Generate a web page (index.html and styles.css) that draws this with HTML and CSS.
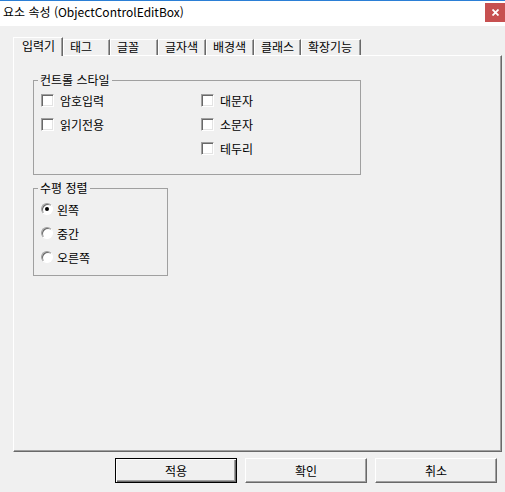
FILE: index.html
```html
<!DOCTYPE html>
<html lang="ko">
<head>
  <meta charset="UTF-8">
  <title>요소 속성 (ObjectControlEditBox)</title>
  <link rel="stylesheet" href="styles.css">
</head>
<body>
  <div class="titlebar">
    <span class="title">요소 속성 (ObjectControlEditBox)</span>
    <button class="close" aria-label="닫기">
      <svg width="7" height="7" viewBox="0 0 7 7"><path d="M0.5 0.5L6.5 6.5M6.5 0.5L0.5 6.5" stroke="#fff" stroke-width="1.8"/></svg>
    </button>
  </div>

  <div class="dialog">
    <div class="tabs">
      <div class="tab active" style="width: 50px">입력기</div>
      <div class="tab" style="width: 47px">태그</div>
      <div class="tab" style="width: 48px">글꼴</div>
      <div class="tab" style="width: 48px">글자색</div>
      <div class="tab" style="width: 48px">배경색</div>
      <div class="tab" style="width: 47px">클래스</div>
      <div class="tab" style="width: 60px">확장기능</div>
    </div>

    <div class="panel">
      <fieldset class="group style-group">
        <legend>컨트롤 스타일</legend>
        <div class="check-grid">
          <label class="check"><span class="box"></span>암호입력</label>
          <label class="check"><span class="box"></span>대문자</label>
          <label class="check"><span class="box"></span>읽기전용</label>
          <label class="check"><span class="box"></span>소문자</label>
          <span></span>
          <label class="check"><span class="box"></span>테두리</label>
        </div>
      </fieldset>

      <fieldset class="group align-group">
        <legend>수평 정렬</legend>
        <label class="radio"><span class="dot checked"></span>왼쪽</label>
        <label class="radio"><span class="dot"></span>중간</label>
        <label class="radio"><span class="dot"></span>오른쪽</label>
      </fieldset>
    </div>

    <div class="buttons">
      <button class="btn default">적용</button>
      <button class="btn">확인</button>
      <button class="btn">취소</button>
    </div>
  </div>
</body>
</html>
```

FILE: styles.css
```css
body {
  margin: 0;
  background-color: #f0f0f0;
  font-family: "Noto Sans CJK KR", "Noto Sans", sans-serif;
  font-size: 12px;
  color: #000;
}

.titlebar {
  height: 25px;
  background: #fff;
  border-top: 1px solid #2b7fd6;
  display: flex;
  justify-content: space-between;
  align-items: flex-start;
}

.title {
  padding-left: 3px;
  line-height: 22px;
}

.close {
  width: 20px;
  height: 19px;
  margin-top: 2px;
  padding: 0;
  border: none;
  background: #c75050;
  display: flex;
  align-items: center;
  justify-content: center;
}

.dialog {
  padding-top: 11px;
}

/* tab strip */
.tabs {
  display: flex;
  align-items: flex-end;
  height: 18px;
  margin-left: 13px;
}

.tab {
  box-sizing: border-box;
  height: 16px;
  padding-left: 6px;
  line-height: 14px;
  border-top: 1px solid #fff;
  border-left: 1px solid #fff;
  border-right: 1px solid #696969;
  box-shadow: inset -1px 0 0 #a0a0a0;
  white-space: nowrap;
}

.tab.active {
  height: 19px;
  margin-bottom: -1px;
  padding-left: 8px;
  line-height: 16px;
  background: #f0f0f0;
  position: relative;
  z-index: 1;
}

/* tab body */
.panel {
  box-sizing: border-box;
  width: 489px;
  height: 397px;
  margin-left: 13px;
  padding: 17px 0 0 19px;
  border-top: 1px solid #fff;
  border-left: 1px solid #fff;
  border-right: 1px solid #696969;
  border-bottom: 1px solid #696969;
  box-shadow: inset -1px -1px 0 #a0a0a0;
}

.group {
  margin: 0;
  min-width: 0;
  border: 1px solid #a0a0a0;
  box-sizing: border-box;
}

.group legend {
  padding: 0 2px;
  margin-left: -3px;
  line-height: 14px;
}

.style-group {
  width: 328px;
  padding: 1px 0 14px 7px;
}

.align-group {
  width: 135px;
  margin-top: 6px;
  padding: 2px 0 6px 7px;
}

.check-grid {
  display: grid;
  grid-template-columns: 160px 1fr;
}

.check,
.radio {
  display: flex;
  align-items: center;
  height: 24px;
}

.box {
  box-sizing: border-box;
  width: 13px;
  height: 13px;
  margin-right: 6px;
  background: #fff;
  border: 1px solid;
  border-color: #a0a0a0 #fff #fff #a0a0a0;
  box-shadow: inset 1px 1px 0 #696969, inset -1px -1px 0 #e3e3e3;
}

.dot {
  box-sizing: border-box;
  width: 12px;
  height: 12px;
  margin-right: 4px;
  border-radius: 50%;
  background: #fff;
  border: 1px solid;
  border-color: #a0a0a0 #fff #fff #a0a0a0;
  box-shadow: inset 1px 1px 0 #696969;
  display: flex;
  align-items: center;
  justify-content: center;
}

.dot.checked::after {
  content: "";
  width: 4px;
  height: 4px;
  border-radius: 50%;
  background: #000;
}

/* bottom buttons */
.buttons {
  display: flex;
  justify-content: flex-end;
  gap: 8px;
  margin-top: 6px;
  padding-right: 8px;
}

.btn {
  box-sizing: border-box;
  width: 122px;
  height: 25px;
  padding: 0;
  font: inherit;
  background: #f0f0f0;
  border: 1px solid;
  border-color: #fff #696969 #696969 #fff;
  box-shadow: inset -1px -1px 0 #a0a0a0;
}

.btn.default {
  border: 1px solid #000;
  box-shadow: inset 1px 1px 0 #fff, inset -1px -1px 0 #696969, inset -2px -2px 0 #a0a0a0;
}
```
